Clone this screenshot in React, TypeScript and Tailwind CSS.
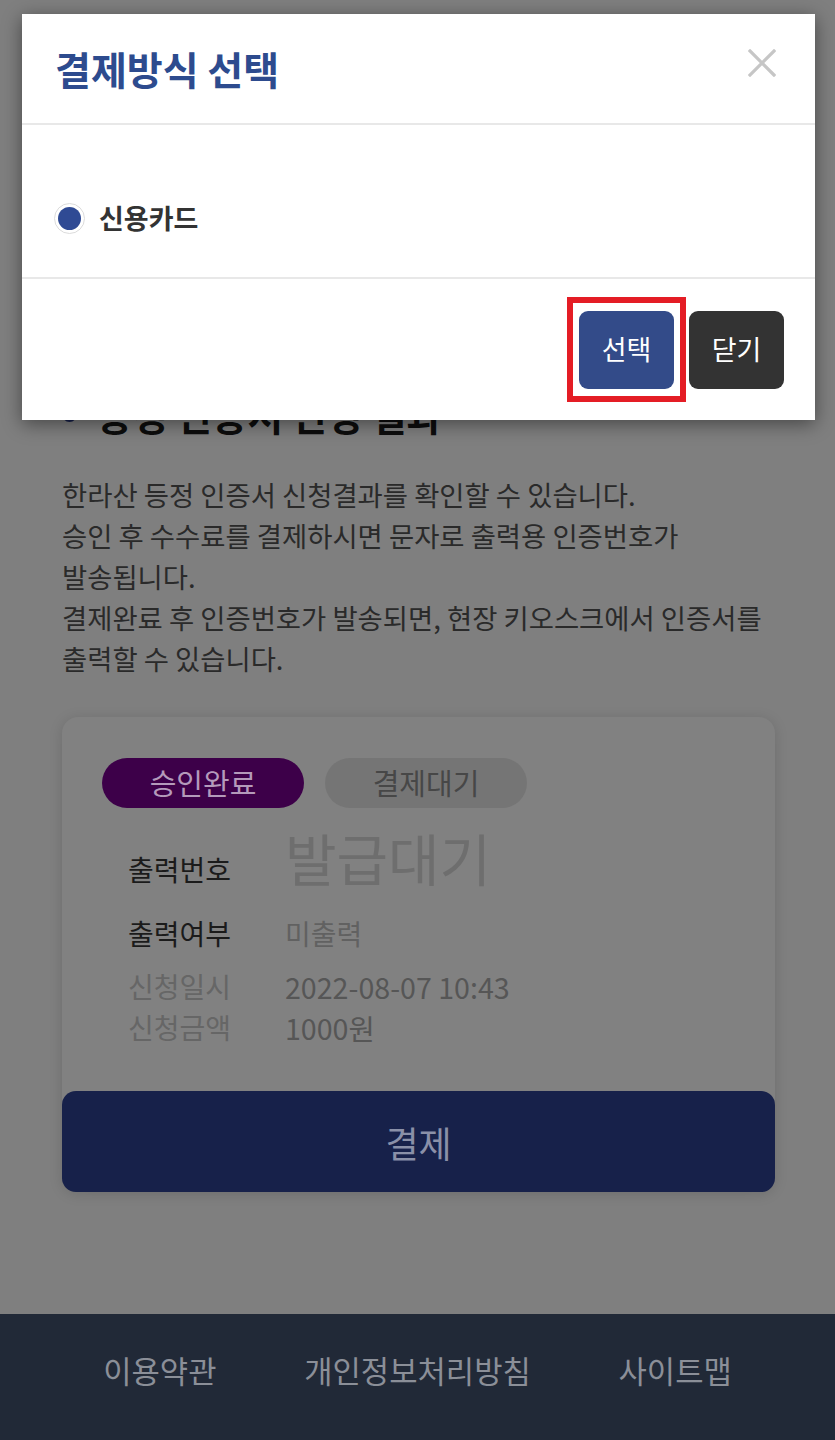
import React from "react";

const font = { fontFamily: '"Noto Sans CJK KR", "Noto Sans", sans-serif' };

export default function App() {
  return (
    <div className="relative w-full h-[1440px] overflow-hidden bg-[#7f7f7f]" style={font}>
      {/* Page (dimmed behind the dialog) */}
      <main className="flex flex-col pt-[389px]">
        <section className="pl-[62px] pr-[60px]">
          <h2 className="flex items-center gap-[20px] text-[38.5px] leading-[50px] font-bold text-[#0d0d0d]">
            <span className="w-[15px] h-[15px] rounded-full bg-[#16204a] shrink-0" />
            <span>등정 인증서 신청 결과</span>
          </h2>
          <p className="mt-[35px] text-[27.4px] leading-[41px] text-[#2a2a2a] break-keep">
            한라산 등정 인증서 신청결과를 확인할 수 있습니다.
            <br />
            승인 후 수수료를 결제하시면 문자로 출력용 인증번호가 발송됩니다.
            <br />
            결제완료 후 인증번호가 발송되면, 현장 키오스크에서 인증서를 출력할 수 있습니다.
          </p>

          <div className="mt-[38px] rounded-[16px] bg-[#818181] shadow-[0_2px_14px_rgba(0,0,0,0.14)] flex flex-col">
            <div className="pt-[41px] px-[40px] flex gap-[21px]">
              <span className="w-[202px] h-[50px] rounded-full bg-[#3d0049] text-[#b49abb] text-[29px] flex items-center justify-center">
                승인완료
              </span>
              <span className="w-[202px] h-[50px] rounded-full bg-[#757575] text-[#474747] text-[29px] flex items-center justify-center">
                결제대기
              </span>
            </div>

            <div className="pl-[66px] pt-[19px] flex flex-col">
              <div className="flex items-baseline">
                <span className="w-[157px] text-[28px] text-[#1b1b1b]">출력번호</span>
                <span className="text-[56px] leading-[60px] text-[#6e6e6e]">발급대기</span>
              </div>
              <div className="mt-[25px] flex items-center h-[36px]">
                <span className="w-[157px] text-[28px] text-[#1b1b1b]">출력여부</span>
                <span className="text-[28px] text-[#616161]">미출력</span>
              </div>
              <div className="mt-[15px] flex flex-col text-[28px] leading-[41px]">
                <div className="flex">
                  <span className="w-[157px] text-[#666666]">신청일시</span>
                  <span className="text-[28.6px] text-[#565656]">2022-08-07 10:43</span>
                </div>
                <div className="flex">
                  <span className="w-[157px] text-[#666666]">신청금액</span>
                  <span className="text-[28.6px] text-[#565656]">1000원</span>
                </div>
              </div>
            </div>

            <button className="mt-[43px] h-[101px] w-full rounded-[14px] bg-[#17214a] text-[36px] text-[#8a90a8]">
              결제
            </button>
          </div>
        </section>

        <footer className="mt-[122px] h-[126px] bg-[#212937] grid grid-cols-3 px-[31px] pt-[36px]">
          <a className="text-center text-[30.8px] leading-[40px] text-[#8b8f98]">이용약관</a>
          <a className="text-center text-[30.8px] leading-[40px] text-[#8b8f98]">개인정보처리방침</a>
          <a className="text-center text-[30.8px] leading-[40px] text-[#8b8f98]">사이트맵</a>
        </footer>
      </main>

      {/* Dialog */}
      <div className="absolute top-[14px] left-[22px] w-[793px] bg-white shadow-[0_4px_18px_rgba(0,0,0,0.45)] flex flex-col">
        <div className="h-[111px] flex items-center justify-between pl-[33px] pr-[39px] border-b-[2px] border-[#e8e8e8]">
          <h1 className="text-[39px] font-bold text-[#2d4b8e] leading-none">결제방식 선택</h1>
          <svg width="28" height="28" viewBox="0 0 28 28" fill="none" className="mb-[11px]">
            <path d="M2 2 L26 26 M26 2 L2 26" stroke="#c6c6c6" strokeWidth="3.2" strokeLinecap="square" />
          </svg>
        </div>
        <div className="pt-[76px] pb-[42px] px-[32px] border-b-[2px] border-[#e8e8e8]">
          <label className="flex items-center gap-[14px] h-[34px]">
            <span className="w-[31px] h-[31px] rounded-full border-[1.5px] border-[#dcdcdc] bg-white flex items-center justify-center">
              <span className="w-[23px] h-[23px] rounded-full bg-[#2f4a94]" />
            </span>
            <span className="text-[27px] font-bold text-[#333333]">신용카드</span>
          </label>
        </div>
        <div className="h-[141px] flex items-center justify-end gap-[15px] pr-[31px]">
          <button className="w-[95px] h-[78px] rounded-[9px] bg-[#334b89] text-white text-[27px]">선택</button>
          <button className="w-[95px] h-[78px] rounded-[9px] bg-[#333333] text-white text-[27px]">닫기</button>
        </div>
        {/* annotation highlight */}
        <div className="absolute left-[545px] top-[283px] w-[119px] h-[105px] border-[6px] border-[#e41d25]" />
      </div>
    </div>
  );
}
